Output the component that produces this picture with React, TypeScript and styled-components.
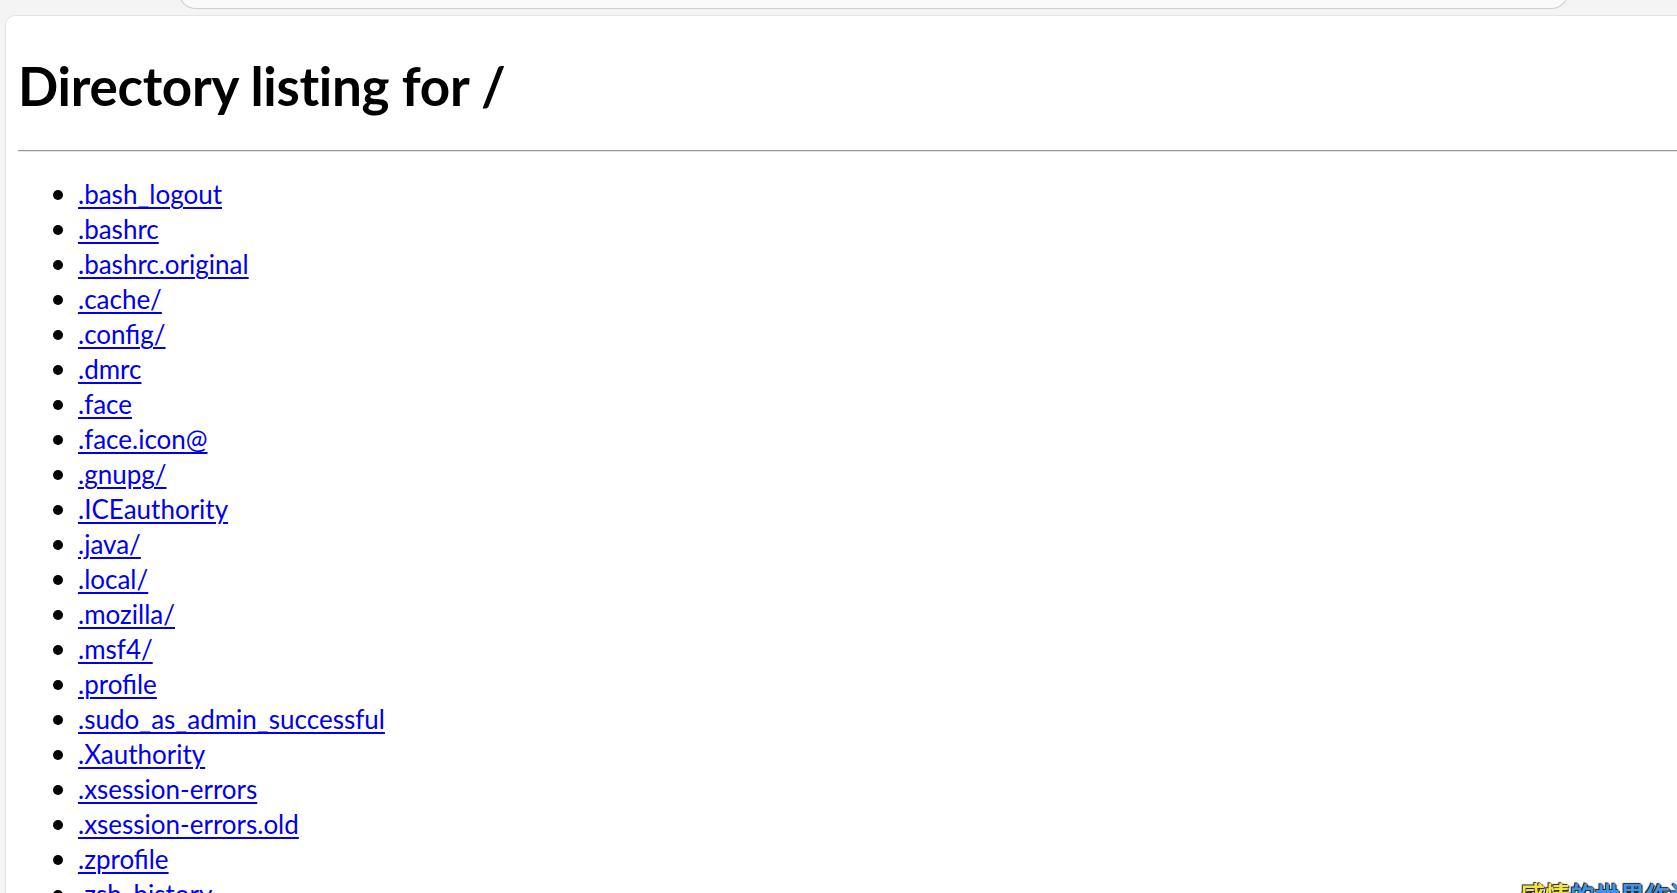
import React from "react";
import styled, { createGlobalStyle } from "styled-components";

const files = [
  ".bash_logout",
  ".bashrc",
  ".bashrc.original",
  ".cache/",
  ".config/",
  ".dmrc",
  ".face",
  ".face.icon@",
  ".gnupg/",
  ".ICEauthority",
  ".java/",
  ".local/",
  ".mozilla/",
  ".msf4/",
  ".profile",
  ".sudo_as_admin_successful",
  ".Xauthority",
  ".xsession-errors",
  ".xsession-errors.old",
  ".zprofile",
  ".zsh_history",
];

const GlobalStyle = createGlobalStyle`
  html, body {
    margin: 0;
    padding: 0;
    overflow: hidden;
    background: #f4f4f4;
  }
  body {
    width: 1677px;
    height: 893px;
  }
`;

const Window = styled.div`
  display: flex;
  flex-direction: column;
  height: 893px;
  background: #f4f4f4;
`;

const TopBar = styled.div`
  height: 15px;
  flex-shrink: 0;
  padding: 0 108px 0 178px;
  display: flex;
  align-items: flex-end;
`;

const AddressBar = styled.div`
  flex: 1;
  height: 30px;
  margin-bottom: 6px;
  background: #fafafa;
  border: 1px solid #cfcfcf;
  border-radius: 0 0 18px 18px;
  border-top: none;
`;

const Frame = styled.div`
  flex: 1;
  display: flex;
  padding-left: 5px;
  min-height: 0;
`;

const Page = styled.main`
  flex: 1;
  background: #fff;
  border-top: 1px solid #e4e4e4;
  border-left: 1px solid #e4e4e4;
  border-top-left-radius: 10px;
  padding: 0 0 0 12px;
  overflow: hidden;
  font-family: Lato, "Noto Sans", sans-serif;
  color: #000;
`;

const Title = styled.h1`
  margin: 36px 0 30px;
  font-size: 53px;
  line-height: 68px;
  font-weight: 700;
  letter-spacing: -0.3px;
`;

const Rule = styled.hr`
  margin: 0;
  border: none;
  border-top: 1px solid #9a9a9a;
  border-bottom: 1px solid #e6e6e6;
`;

const List = styled.ul`
  margin: 25px 0 0;
  padding-left: 60px;
  list-style: none;
  font-size: 26px;
  line-height: 35px;
`;

const Item = styled.li`
  display: flex;
  align-items: center;

  &::before {
    content: "";
    flex-shrink: 0;
    width: 10px;
    height: 10px;
    border-radius: 50%;
    background: #000;
    margin-left: -25px;
    margin-right: 15px;
  }
`;

const FileLink = styled.a`
  color: #0000ee;
  text-decoration: underline;
  text-underline-offset: 3px;
  text-decoration-thickness: 2px;
  white-space: nowrap;
`;

const Lyric = styled.div`
  position: fixed;
  left: 1520px;
  top: 879px;
  white-space: nowrap;
  font-family: "Noto Sans CJK SC", sans-serif;
  font-size: 25px;
  font-weight: 700;
  line-height: 30px;
  text-shadow: 0 0 1px #222, 1px 1px 1px #222, -1px -1px 1px #222;
`;

const Sung = styled.span`
  color: #f2e24a;
`;

const Unsung = styled.span`
  color: #3f93e6;
`;

export default function App() {
  return (
    <Window>
      <GlobalStyle />
      <TopBar>
        <AddressBar />
      </TopBar>
      <Frame>
        <Page>
          <Title>Directory listing for /</Title>
          <Rule />
          <List>
            {files.map((name) => (
              <Item key={name}>
                <FileLink href={"#" + name}>{name}</FileLink>
              </Item>
            ))}
          </List>
        </Page>
      </Frame>
      <Lyric>
        <Sung>感情</Sung>
        <Unsung>的世界作词</Unsung>
      </Lyric>
    </Window>
  );
}
